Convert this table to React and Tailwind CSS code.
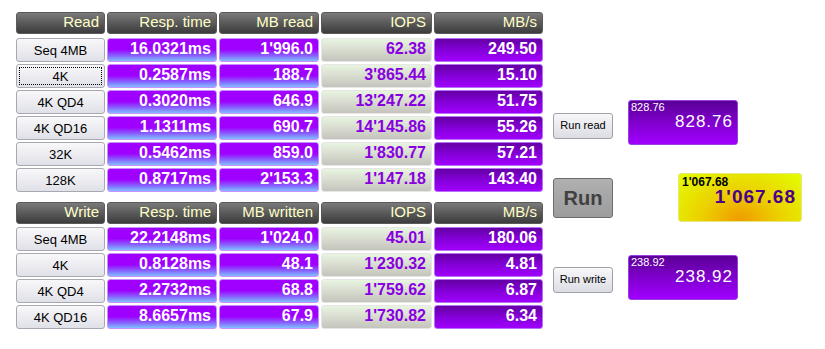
const readRows = [
  ["Seq 4MB", "16.0321ms", "1'996.0", "62.38", "249.50"],
  ["4K", "0.2587ms", "188.7", "3'865.44", "15.10"],
  ["4K QD4", "0.3020ms", "646.9", "13'247.22", "51.75"],
  ["4K QD16", "1.1311ms", "690.7", "14'145.86", "55.26"],
  ["32K", "0.5462ms", "859.0", "1'830.77", "57.21"],
  ["128K", "0.8717ms", "2'153.3", "1'147.18", "143.40"],
];

const writeRows = [
  ["Seq 4MB", "22.2148ms", "1'024.0", "45.01", "180.06"],
  ["4K", "0.8128ms", "48.1", "1'230.32", "4.81"],
  ["4K QD4", "2.2732ms", "68.8", "1'759.62", "6.87"],
  ["4K QD16", "8.6657ms", "67.9", "1'730.82", "6.34"],
];

const cols = "grid grid-cols-[89px_110px_100px_111px_109px] gap-x-[2px]";

function Header({ labels }) {
  return (
    <div className={`${cols} h-[22px]`}>
      {labels.map((l) => (
        <div
          key={l}
          className="flex items-center justify-end pr-[5px] pb-[3px] rounded-[3px] border border-[#5a5a5a] bg-[linear-gradient(to_bottom,#7a7a7a,#5a5a5a_50%,#3c3c3c)] text-[15px] leading-none text-[#ffffc8]"
        >
          {l}
        </div>
      ))}
    </div>
  );
}

function Row({ r, focused }) {
  const val = "flex items-center justify-end pr-[5px] pb-[2px] rounded-[3px] border text-[16px] font-bold leading-none";
  return (
    <div className={`${cols} h-[24px]`}>
      <div
        className={`flex items-center justify-center rounded-[3px] border border-[#a8a8b0] bg-[linear-gradient(to_bottom,#f8f8fa,#e0e0e8)] text-[13px] leading-none text-black ${
          focused ? "outline-1 outline-dotted outline-black outline-offset-[-4px]" : ""
        }`}
      >
        {r[0]}
      </div>
      <div className={`${val} border-[#c890ff] text-white bg-[linear-gradient(to_bottom,#a000ff_0%,#9e00ff_48%,#8860ff_75%,#80c0ff_100%)]`}>
        {r[1]}
      </div>
      <div className={`${val} border-[#c890ff] text-white bg-[linear-gradient(to_bottom,#a000ff_0%,#9e00ff_48%,#8860ff_75%,#80c0ff_100%)]`}>
        {r[2]}
      </div>
      <div className={`${val} border-[#e6e6e6] text-[#8800e0] bg-[linear-gradient(to_bottom,#e8f4e0,#d8dcd0_50%,#c4c4bc)]`}>
        {r[3]}
      </div>
      <div className={`${val} border-[#b870f8] text-white bg-[linear-gradient(to_bottom,#6400a4,#8400d8_50%,#a000fc)]`}>
        {r[4]}
      </div>
    </div>
  );
}

function SmallButton({ children }) {
  return (
    <button className="w-[60px] h-[26px] rounded-[3px] border border-[#a0a0a8] bg-[linear-gradient(to_bottom,#f8f8fa,#dcdce4)] text-[11px] leading-none text-black">
      {children}
    </button>
  );
}

function ScoreBox({ value }) {
  return (
    <div className="w-[110px] h-[45px] flex flex-col rounded-[3px] border border-[#9a40e0] bg-[linear-gradient(to_bottom,#5a0096,#7c00c8_45%,#a000ff)] text-white">
      <div className="pl-[2px] pt-[1px] text-[11px] leading-none">{value}</div>
      <div className="self-end pr-[4px] text-[17px] tracking-[1px] leading-none">{value}</div>
    </div>
  );
}

export default function App() {
  return (
    <div className="w-[825px] h-[349px] bg-white flex gap-[10px] pl-[16px] pt-[12px] font-['Liberation_Sans',Arial,sans-serif]">
      <div className="flex flex-col">
        <Header labels={["Read", "Resp. time", "MB read", "IOPS", "MB/s"]} />
        <div className="flex flex-col gap-[2px] mt-[4px]">
          {readRows.map((r, i) => (
            <Row key={i} r={r} focused={i === 1} />
          ))}
        </div>
        <div className="mt-[10px]">
          <Header labels={["Write", "Resp. time", "MB written", "IOPS", "MB/s"]} />
        </div>
        <div className="flex flex-col gap-[2px] mt-[3px]">
          {writeRows.map((r, i) => (
            <Row key={i} r={r} />
          ))}
        </div>
      </div>

      <div className="flex flex-col pt-[88px]">
        <div className="flex items-start gap-[15px]">
          <div className="mt-[12px]">
            <SmallButton>Run read</SmallButton>
          </div>
          <ScoreBox value="828.76" />
        </div>

        <div className="flex items-start gap-[65px] mt-[28px]">
          <button className="mt-[5px] w-[60px] h-[40px] rounded-[3px] border border-[#6c6c6c] bg-[linear-gradient(to_bottom,#b0b0b0,#9c9c9c)] text-[20px] font-bold leading-none text-[#404040]">
            Run
          </button>
          <div className="w-[124px] h-[49px] flex flex-col rounded-[3px] border border-[#e8e880] bg-[radial-gradient(ellipse_at_50%_100%,#f09a00_0%,#ecd000_45%,#e2ff00_100%)]">
            <div className="pl-[3px] pt-[2px] text-[12px] font-bold leading-none text-black">1'067.68</div>
            <div className="self-end pr-[5px] mt-[-1px] text-[19px] font-bold tracking-[1px] leading-none text-[#4a0088]">1'067.68</div>
          </div>
        </div>

        <div className="flex items-start gap-[15px] mt-[33px]">
          <div className="mt-[11px]">
            <SmallButton>Run write</SmallButton>
          </div>
          <ScoreBox value="238.92" />
        </div>
      </div>
    </div>
  );
}
